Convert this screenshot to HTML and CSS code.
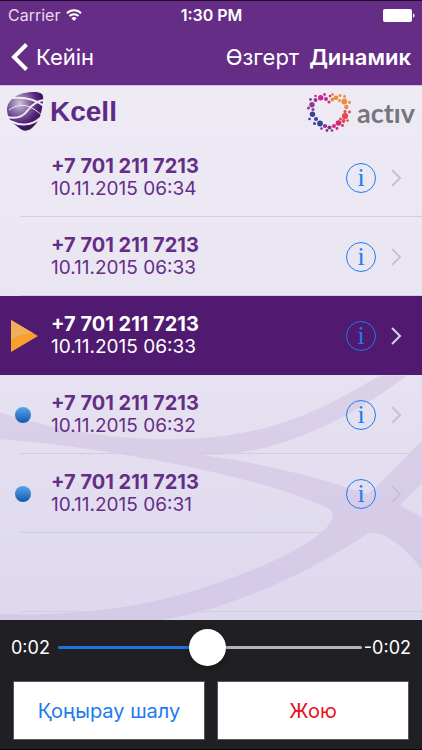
FILE: index.html
```html
<!DOCTYPE html>
<html lang="kk">
<head>
    <meta charset="UTF-8">
    <meta name="viewport" content="width=device-width, initial-scale=1.0">
    <title>Kcell - Voicemail</title>
    <link rel="stylesheet" href="styles.css">
</head>
<body>
    <header class="header">
        <div class="status-bar">
            <div class="carrier">
                <span>Carrier</span>
                <svg width="16" height="12" viewBox="0 0 16 12" fill="none" stroke="#fff" stroke-width="2">
                    <path d="M1 4.2a10 10 0 0 1 14 0"/>
                    <path d="M3.5 7a6.4 6.4 0 0 1 9 0"/>
                    <path d="M8 12L5.4 9.2a3.8 3.8 0 0 1 5.2 0z" fill="#fff" stroke="none"/>
                </svg>
            </div>
            <span class="time">1:30 PM</span>
            <svg class="battery" width="32" height="13" viewBox="0 0 32 13" fill="#fff">
                <rect width="29" height="13" rx="2"/>
                <path d="M30 4.5c2 .5 2 3.5 0 4z"/>
            </svg>
        </div>
        <nav class="nav">
            <a class="back" href="#">
                <svg width="17" height="28" viewBox="0 0 17 28" fill="none" stroke="#fff" stroke-width="4">
                    <path d="M15.5 1.5L3 14l12.5 12.5"/>
                </svg>
                Кейін
            </a>
            <button class="nav-btn">Өзгерт</button>
            <button class="nav-btn active">Динамик</button>
        </nav>
    </header>

    <main class="content">
        <!-- Background ribbons -->
        <svg class="ribbons" viewBox="0 0 422 535" preserveAspectRatio="none">
            <path fill-rule="evenodd" d="M0 327C60 346 120 354 170 354C260 353 310 332 380 290H407C350 333 280 370 203 370C270 379 320 393 368 409C390 389 408 369 422 355V485C408 465 390 450 371 446C310 488 240 517 190 529C170 534 150 537 130 540H0V529C60 531 110 526 160 515C230 497 300 469 327 442C334 433 335 427 328 423C270 396 180 379 122 369C80 362 40 357 0 354ZM422 398L400 420L422 432Z"/>
        </svg>

        <div class="brands">
            <div class="brand kcell">
                <svg width="37" height="40" viewBox="0 0 37 40">
                    <defs>
                        <radialGradient id="gem" cx=".35" cy=".3" r=".65">
                            <stop offset="0" stop-color="#cdc3d6"/>
                            <stop offset=".4" stop-color="#8a6ba3"/>
                            <stop offset=".75" stop-color="#55257f"/>
                            <stop offset="1" stop-color="#391555"/>
                        </radialGradient>
                    </defs>
                    <path d="M0 17C1 6 13 0 27 0C34 0 37 2 36 8C35 20 33 28 27 34C22 40 16 40 11 35C4 30 0 25 0 17Z" fill="url(#gem)"/>
                    <g fill="none" stroke="#efeaf5">
                        <path d="M5 6C16 5 28 7 37 14" stroke-width="2"/>
                        <path d="M37 8C29 9 25 13 21 18C16 25 8 27 0 25" stroke-width="2"/>
                        <path d="M2 18C9 13 16 12 23 15C29 18 32 21 35 23" stroke-width="1"/>
                        <path d="M3 29C13 34 25 34 33 26" stroke-width="2"/>
                    </g>
                </svg>
                <span>Kcell</span>
            </div>
            <div class="brand activ">
                <svg width="44" height="39" viewBox="0 0 44 39">
                    <g fill="#d02690">
                        <circle cx="13.7" cy="4.7" r="2.7"/><circle cx="19" cy="6" r="2"/><circle cx="8.5" cy="3" r="1.3"/>
                        <circle cx="17.5" cy="1.5" r="1.4"/><circle cx="23" cy="3" r="1.3"/><circle cx="22" cy="9" r="1.5"/>
                    </g>
                    <g fill="#8f3a8f">
                        <circle cx="8.5" cy="7" r="2"/><circle cx="5" cy="11.7" r="2.7"/><circle cx="3.5" cy="6.5" r="1.4"/>
                        <circle cx="1.5" cy="15" r="1.5"/><circle cx="6" cy="16.5" r="1.6"/>
                    </g>
                    <g fill="#34429a">
                        <circle cx="5.5" cy="21.3" r="2.7"/><circle cx="9" cy="26" r="2"/><circle cx="13" cy="30.5" r="2.9"/>
                        <circle cx="2.5" cy="26" r="1.3"/><circle cx="7.5" cy="30.5" r="1.5"/>
                    </g>
                    <g fill="#86338e">
                        <circle cx="18" cy="33" r="2.1"/><circle cx="22.5" cy="34.5" r="2.1"/><circle cx="14.5" cy="35.5" r="1.3"/>
                        <circle cx="20" cy="37.5" r="1.4"/><circle cx="25" cy="37.5" r="1.3"/>
                    </g>
                    <g fill="#d52775">
                        <circle cx="27" cy="33" r="2"/><circle cx="31.5" cy="30" r="2.8"/><circle cx="30" cy="35.5" r="1.4"/>
                        <circle cx="35.5" cy="32.5" r="1.4"/>
                    </g>
                    <g fill="#e4484b">
                        <circle cx="33.5" cy="26" r="1.5"/><circle cx="38" cy="23" r="3.1"/><circle cx="36.5" cy="28" r="1.9"/>
                        <circle cx="40.5" cy="27.5" r="1.3"/><circle cx="38" cy="18.5" r="1.6"/><circle cx="42.5" cy="19" r="1.4"/>
                    </g>
                    <g fill="#f08a3c">
                        <circle cx="25.3" cy="6.5" r="1.9"/><circle cx="29" cy="4.7" r="2.3"/><circle cx="25.5" cy="1.5" r="1.4"/>
                        <circle cx="33" cy="2.5" r="1.5"/><circle cx="37.3" cy="8.5" r="2.9"/><circle cx="32.5" cy="7.5" r="1.5"/>
                        <circle cx="39.3" cy="14" r="2.2"/><circle cx="37.5" cy="3.5" r="1.4"/><circle cx="42.5" cy="9.5" r="1.4"/>
                    </g>
                </svg>
                <span>actıv</span>
            </div>
        </div>

        <ul class="messages">
            <li class="message">
                <span class="marker"></span>
                <div class="details">
                    <strong class="phone">+7 701 211 7213</strong>
                    <time class="date">10.11.2015 06:34</time>
                </div>
                <button class="info" aria-label="Info">i</button>
                <svg class="chevron" width="11" height="18" viewBox="0 0 11 18"><path d="M1 1l8 8-8 8"/></svg>
            </li>
            <li class="message">
                <span class="marker"></span>
                <div class="details">
                    <strong class="phone">+7 701 211 7213</strong>
                    <time class="date">10.11.2015 06:33</time>
                </div>
                <button class="info" aria-label="Info">i</button>
                <svg class="chevron" width="11" height="18" viewBox="0 0 11 18"><path d="M1 1l8 8-8 8"/></svg>
            </li>
            <li class="message selected">
                <span class="marker">
                    <svg width="27" height="32" viewBox="0 0 27 32">
                        <path d="M0 0L27 16L0 32Z" fill="#f7a02c"/>
                        <path d="M0 0L22 13C14 13 6 16 0 20Z" fill="#efae57"/>
                    </svg>
                </span>
                <div class="details">
                    <strong class="phone">+7 701 211 7213</strong>
                    <time class="date">10.11.2015 06:33</time>
                </div>
                <button class="info" aria-label="Info">i</button>
                <svg class="chevron" width="11" height="18" viewBox="0 0 11 18"><path d="M1 1l8 8-8 8"/></svg>
            </li>
            <li class="message">
                <span class="marker"><span class="dot"></span></span>
                <div class="details">
                    <strong class="phone">+7 701 211 7213</strong>
                    <time class="date">10.11.2015 06:32</time>
                </div>
                <button class="info" aria-label="Info">i</button>
                <svg class="chevron" width="11" height="18" viewBox="0 0 11 18"><path d="M1 1l8 8-8 8"/></svg>
            </li>
            <li class="message">
                <span class="marker"><span class="dot"></span></span>
                <div class="details">
                    <strong class="phone">+7 701 211 7213</strong>
                    <time class="date">10.11.2015 06:31</time>
                </div>
                <button class="info" aria-label="Info">i</button>
                <svg class="chevron" width="11" height="18" viewBox="0 0 11 18"><path d="M1 1l8 8-8 8"/></svg>
            </li>
            <li class="message"></li>
        </ul>
    </main>

    <footer class="player">
        <div class="progress">
            <label for="seek">0:02</label>
            <input class="seek" id="seek" type="range" min="0" max="100" value="49">
            <span>-0:02</span>
        </div>
        <div class="actions">
            <button class="action">Қоңырау шалу</button>
            <button class="action delete">Жою</button>
        </div>
    </footer>
</body>
</html>
```
FILE: styles.css
```css
* {
    margin: 0;
    padding: 0;
    box-sizing: border-box;
}

body {
    font-family: Inter, Roboto, sans-serif;
    min-height: 100vh;
    display: flex;
    flex-direction: column;
    background: #202024;
}

button {
    font-family: inherit;
    border: none;
    background: none;
    cursor: pointer;
}

svg {
    flex-shrink: 0;
}

/* Header */
.header {
    background: #662d87;
    color: white;
    border-top: 1px solid #1d0b28;
    border-bottom: 1px solid #d9b8f5;
}

.status-bar {
    display: grid;
    grid-template-columns: 1fr auto 1fr;
    align-items: center;
    height: 28px;
    padding: 0 7px 0 8px;
    font-size: 16px;
}

.carrier {
    display: flex;
    align-items: center;
    gap: 6px;
}

.carrier span {
    color: #e6dbee;
}

.time {
    font-weight: 600;
}

.battery {
    justify-self: end;
}

.nav {
    display: flex;
    align-items: center;
    gap: 10px;
    height: 56px;
    padding: 0 11px;
}

.back {
    display: flex;
    align-items: center;
    gap: 8px;
    margin-right: auto;
    color: white;
    font-size: 22px;
    text-decoration: none;
}

.nav-btn {
    color: white;
    font-size: 22px;
}

.nav-btn.active {
    font-weight: 600;
}

/* Message list */
.content {
    position: relative;
    flex: 1;
    background: linear-gradient(#eeebf5 0%, #e8e4f1 45%, #ddd8ee 100%);
    overflow: hidden;
}

.ribbons {
    position: absolute;
    inset: 0;
    width: 100%;
    height: 100%;
    fill: rgba(193, 169, 214, 0.3);
}

.brands {
    position: relative;
    display: flex;
    justify-content: space-between;
    height: 52px;
    padding: 0 7px;
}

.brand {
    display: flex;
    align-items: center;
    gap: 6px;
}

.kcell {
    color: #5f2a86;
    font-family: "Liberation Sans", sans-serif;
    font-size: 28px;
    font-weight: 700;
}

.activ {
    color: #76767a;
    font-family: Lato, sans-serif;
    font-size: 27px;
    font-weight: 700;
    font-variant-ligatures: none;
}

.messages {
    position: relative;
    list-style: none;
}

.message {
    position: relative;
    display: flex;
    align-items: center;
    height: 79px;
    padding-right: 20px;
    color: #642e87;
}

.message::after {
    content: "";
    position: absolute;
    left: 20px;
    right: 0;
    bottom: 0;
    height: 1px;
    background: #d3cedd;
}

.marker {
    width: 51px;
    padding-left: 11px;
    display: flex;
}

.dot {
    width: 16px;
    height: 16px;
    margin-left: 4px;
    border-radius: 50%;
    background: linear-gradient(#5ca5ea, #1059ad);
}

.details {
    flex: 1;
    display: flex;
    flex-direction: column;
    padding-bottom: 2px;
}

.phone {
    font-size: 20px;
    line-height: 24px;
    font-weight: 700;
}

.date {
    font-size: 19px;
    line-height: 22px;
}

.info {
    width: 30px;
    height: 30px;
    margin-right: 15px;
    border: 1px solid #1c7cf2;
    border-radius: 50%;
    color: #1c7cf2;
    font-family: "Liberation Serif", serif;
    font-size: 26px;
    line-height: 26px;
}

.chevron {
    fill: none;
    stroke: #c6c3cd;
    stroke-width: 2;
}

.selected {
    background: #501a70;
    color: white;
}

.selected::after {
    display: none;
}

.selected .chevron {
    stroke: #dccfe5;
}

/* Player */
.player {
    background: #202024;
    color: white;
    padding: 9px 11px;
    border-bottom: 1px solid #000;
}

.progress {
    display: flex;
    align-items: center;
    height: 37px;
    font-size: 18px;
}

.seek {
    appearance: none;
    flex: 1;
    min-width: 0;
    height: 37px;
    margin: 0 2px 0 8px;
    background: none;
}

.seek::-webkit-slider-runnable-track {
    height: 3px;
    border-radius: 2px;
    background: linear-gradient(to right, #1c74e0 50%, #b5b5b8 50%);
}

.seek::-webkit-slider-thumb {
    appearance: none;
    width: 37px;
    height: 37px;
    margin-top: -17px;
    border-radius: 50%;
    background: white;
    box-shadow: 0 3px 6px rgba(0, 0, 0, 0.3);
}

.actions {
    display: grid;
    grid-template-columns: 1fr 1fr;
    gap: 12px;
    padding: 15px 2px 0;
}

.action {
    height: 59px;
    border: 1px solid #55555a;
    background: white;
    color: #1c7ceb;
    font-size: 20px;
}

.action.delete {
    color: #e8101c;
}
```
